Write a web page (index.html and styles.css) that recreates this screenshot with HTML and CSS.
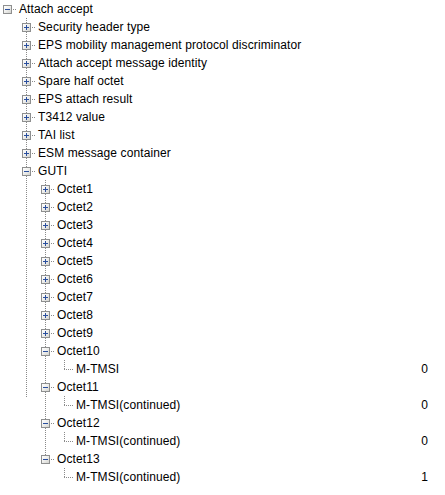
FILE: index.html
```html
<!DOCTYPE html>
<html>
<head>
<meta charset="utf-8">
<link rel="stylesheet" href="styles.css">
</head>
<body>
<div class="tree">
  <div class="row l0"><span class="box minus"></span><span class="dash"></span><span class="label">Attach accept</span></div>
  <div class="kids k1">
    <div class="row l1"><span class="box plus"></span><span class="dash"></span><span class="label">Security header type</span></div>
    <div class="row l1"><span class="box plus"></span><span class="dash"></span><span class="label">EPS mobility management protocol discriminator</span></div>
    <div class="row l1"><span class="box plus"></span><span class="dash"></span><span class="label">Attach accept message identity</span></div>
    <div class="row l1"><span class="box plus"></span><span class="dash"></span><span class="label">Spare half octet</span></div>
    <div class="row l1"><span class="box plus"></span><span class="dash"></span><span class="label">EPS attach result</span></div>
    <div class="row l1"><span class="box plus"></span><span class="dash"></span><span class="label">T3412 value</span></div>
    <div class="row l1"><span class="box plus"></span><span class="dash"></span><span class="label">TAI list</span></div>
    <div class="row l1"><span class="box plus"></span><span class="dash"></span><span class="label">ESM message container</span></div>
    <div class="row l1"><span class="box minus"></span><span class="dash"></span><span class="label">GUTI</span></div>
    <div class="kids k2">
      <div class="row l2"><span class="box plus"></span><span class="dash"></span><span class="label">Octet1</span></div>
      <div class="row l2"><span class="box plus"></span><span class="dash"></span><span class="label">Octet2</span></div>
      <div class="row l2"><span class="box plus"></span><span class="dash"></span><span class="label">Octet3</span></div>
      <div class="row l2"><span class="box plus"></span><span class="dash"></span><span class="label">Octet4</span></div>
      <div class="row l2"><span class="box plus"></span><span class="dash"></span><span class="label">Octet5</span></div>
      <div class="row l2"><span class="box plus"></span><span class="dash"></span><span class="label">Octet6</span></div>
      <div class="row l2"><span class="box plus"></span><span class="dash"></span><span class="label">Octet7</span></div>
      <div class="row l2"><span class="box plus"></span><span class="dash"></span><span class="label">Octet8</span></div>
      <div class="row l2"><span class="box plus"></span><span class="dash"></span><span class="label">Octet9</span></div>
      <div class="row l2"><span class="box minus"></span><span class="dash"></span><span class="label">Octet10</span></div>
      <div class="row l3"><span class="elbow"></span><span class="label">M-TMSI</span><span class="value">0</span></div>
      <div class="row l2"><span class="box minus"></span><span class="dash"></span><span class="label">Octet11</span></div>
      <div class="row l3"><span class="elbow"></span><span class="label">M-TMSI(continued)</span><span class="value">0</span></div>
      <div class="row l2"><span class="box minus"></span><span class="dash"></span><span class="label">Octet12</span></div>
      <div class="row l3"><span class="elbow"></span><span class="label">M-TMSI(continued)</span><span class="value">0</span></div>
      <div class="row l2"><span class="box minus"></span><span class="dash"></span><span class="label">Octet13</span></div>
      <div class="row l3"><span class="elbow"></span><span class="label">M-TMSI(continued)</span><span class="value">1</span></div>
    </div>
  </div>
</div>
</body>
</html>
```

FILE: styles.css
```css
html, body {
  margin: 0;
  padding: 0;
  background: #ffffff;
}

.tree {
  font-family: "Liberation Sans", Arial, sans-serif;
  font-size: 12px;
  letter-spacing: 0.1px;
  color: #000000;
  width: 445px;
}

.row {
  display: flex;
  align-items: center;
  height: 18px;
  box-sizing: border-box;
  padding-right: 17px;
  white-space: nowrap;
}

.l0 { padding-left: 3px; }
.l1 { padding-left: 22px; }
.l2 { padding-left: 41px; }
.l3 { padding-left: 60px; }

.box {
  position: relative;
  flex: none;
  width: 9px;
  height: 9px;
  box-sizing: border-box;
  border: 1px solid #8e8f8f;
  background: linear-gradient(135deg, #ffffff 0%, #f0f0ee 45%, #d4d4cf 100%);
  margin-top: 1px;
}

.box::before {
  content: "";
  position: absolute;
  left: 1px;
  top: 3px;
  width: 5px;
  height: 1px;
  background: #2a4f9e;
}

.plus::after {
  content: "";
  position: absolute;
  left: 3px;
  top: 1px;
  width: 1px;
  height: 5px;
  background: #2a4f9e;
}

.dash {
  flex: none;
  width: 4px;
  height: 1px;
  margin: 1px 2px 0 1px;
  background: repeating-linear-gradient(to right, #8a8a8a 0 1px, transparent 1px 2px);
}

.elbow {
  flex: none;
  align-self: stretch;
  width: 16px;
  background-image:
    repeating-linear-gradient(to bottom, #8a8a8a 0 1px, transparent 1px 2px),
    repeating-linear-gradient(to right, #8a8a8a 0 1px, transparent 1px 2px);
  background-size: 1px 10px, 10px 1px;
  background-position: 4px 0, 4px 9px;
  background-repeat: no-repeat;
}

.label {
  flex: none;
}

.value {
  margin-left: auto;
}

.kids {
  background-image: repeating-linear-gradient(to bottom, #8a8a8a 0 1px, transparent 1px 2px);
  background-repeat: no-repeat;
}

.k1 {
  background-position: 26px 0;
  background-size: 1px 379px;
}

.k2 {
  background-position: 45px 0;
  background-size: 1px calc(100% - 26px);
}
```
